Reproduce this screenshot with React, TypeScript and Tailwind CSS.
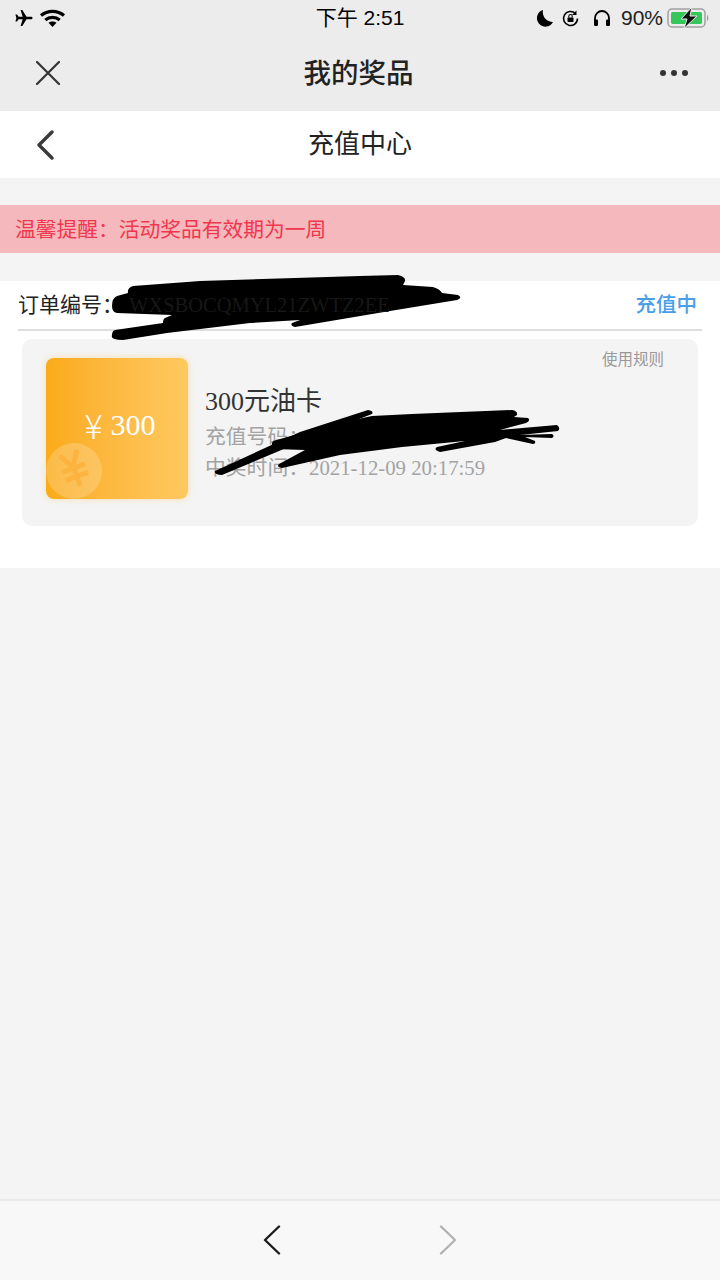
const cjkSans = "font-['Liberation_Sans','Noto_Sans_CJK_SC',sans-serif]";
const cjkSerif = "font-['Liberation_Serif','Noto_Sans_CJK_SC',serif]";

function StatusBar() {
  return (
    <div className="relative flex h-[36px] items-center justify-between pl-[14px] pr-[9px] text-black">
      <div className="flex items-center gap-[6px]">
        <svg width="19" height="18" viewBox="0 0 19 18" fill="currentColor">
          <path d="M18.600 9c0-.8-.9-1.300-1.900-1.300h-4.200L8.300 1H6.600l2.100 6.700H4.600L3 5.400H1.400l1 3.600-1 3.600H3l1.600-2.300h4.100L6.600 17h1.700l4.200-6.700h4.200c1 0 1.900-.5 1.900-1.300z" />
        </svg>
        <svg width="27" height="20" viewBox="0 0 27 20" fill="none" stroke="currentColor" strokeWidth="3.200">
          <path d="M2 7.500c6.500-5.600 16.500-5.600 23 0" />
          <path d="M6.300 12c4-3.400 10.400-3.400 14.400 0" />
          <path d="M13.500 19l-4-4.200c2.200-1.700 5.800-1.700 8 0z" fill="currentColor" stroke="none" />
        </svg>
      </div>
      <div className={`absolute left-0 right-0 text-center text-[21px] ${cjkSans}`}>下午 2:51</div>
      <div className="flex items-center">
        <svg width="18" height="18" viewBox="0 0 18 18" fill="currentColor" className="mr-[7px]">
          <path d="M7 1A8.500 8.500 0 1 0 17 13 A10 10 0 0 1 7 1z" />
        </svg>
        <svg width="19" height="19" viewBox="0 0 19 19" fill="none" stroke="currentColor" strokeWidth="1.600" className="mr-[13px]">
          <path d="M16.500 9.500a7 7 0 1 1-2.200-5.100" />
          <path d="M15.500 1.500v4.500h-4.500z" fill="currentColor" stroke="none" />
          <rect x="6.500" y="8.500" width="6" height="4.500" rx="0.800" fill="currentColor" stroke="none" />
          <path d="M7.800 8.500V7.200a1.700 1.700 0 0 1 3.400 0v1.300" strokeWidth="1.100" />
        </svg>
        <svg width="18" height="18" viewBox="0 0 18 18" fill="none" className="mr-[10px]">
          <path d="M2 13V9a7 7 0 0 1 14 0v4" stroke="currentColor" strokeWidth="1.800" />
          <rect x="1" y="10.500" width="4" height="6.500" rx="1.300" fill="currentColor" />
          <rect x="13" y="10.500" width="4" height="6.500" rx="1.300" fill="currentColor" />
        </svg>
        <span className={`mr-[4px] text-[21px] text-[#222] ${cjkSans}`}>90%</span>
        <svg width="44" height="22" viewBox="0 0 44 22" fill="none">
          <rect x="1" y="2" width="37" height="18" rx="4" stroke="#a0a0a0" strokeWidth="1.500" />
          <rect x="4" y="5" width="31" height="12" rx="1.800" fill="#35c759" />
          <path d="M40 8c1.800.4 1.800 5.600 0 6z" fill="#a0a0a0" />
          <path d="M25 0L14 12h6l-3 9.500L30 9h-7z" fill="#111" stroke="#ececec" strokeWidth="1" />
        </svg>
      </div>
    </div>
  );
}

function TitleBar() {
  return (
    <div className="flex h-[75px] items-center justify-between pl-[36px] pr-[32px]">
      <svg width="24" height="24" viewBox="0 0 24 24" stroke="#333" strokeWidth="2.200" strokeLinecap="round" className="mb-[2px]">
        <path d="M1 1l22 22M23 1L1 23" />
      </svg>
      <h1 className={`mr-[3px] text-[27.500px] font-medium text-[#222] ${cjkSans}`}>我的奖品</h1>
      <div className="mb-[2px] flex gap-[5px]">
        <span className="h-[6px] w-[6px] rounded-full bg-[#333]" />
        <span className="h-[6px] w-[6px] rounded-full bg-[#333]" />
        <span className="h-[6px] w-[6px] rounded-full bg-[#333]" />
      </div>
    </div>
  );
}

function Thumb() {
  return (
    <div className="relative flex h-[141px] w-[142px] shrink-0 items-center justify-center overflow-hidden rounded-[8px] bg-gradient-to-r from-[#fbab17] to-[#fec95f] shadow-[0_0_6px_rgba(251,200,110,0.55)]">
      <div className="flex items-center gap-[8px] pb-[8px] pl-[6px] text-white">
        <span className="font-['Noto_Sans_CJK_SC',sans-serif] text-[34px] leading-[40px] font-light">¥</span>
        <span className={`text-[30px] ${cjkSerif}`}>300</span>
      </div>
      <svg width="60" height="60" viewBox="0 0 60 60" className="absolute bottom-0 left-0">
        <circle cx="28" cy="32" r="28" fill="#ffffff" fillOpacity="0.2" />
        <g transform="rotate(-20 28 30)" fill="none" stroke="#fcb33f" strokeWidth="5">
          <path d="M19 13l9 15 9-15M28 27v21M16 29h24M16 38h24" />
        </g>
      </svg>
    </div>
  );
}

function Scribbles() {
  return (
    <svg width="720" height="1280" viewBox="0 0 720 1280" className="pointer-events-none absolute left-0 top-0">
      <path
        fill="#000"
        d="M112 306 Q112 298 117 296 L128 293 Q127 288 133 286 L200 281 L360 276 L398 275 Q406 277 405 281 L403 285 L433 287 Q440 289 442 293 L458 295 Q463 298 457 300 L390 311 L295 327 Q290 326 292 323 L300 320 L250 323 L167 333 L123 340 Q110 340 112 335 Q112 331 115 330 L163 323 Q163 319 165 318 L172 315 L117 313 Q112 312 112 306 Z"
      />
      <g fill="#000">
        <path d="M215 471 L300 432 L368 410 Q374 411 372 414 L310 438 L222 475 Q214 475 215 471 Z" />
        <path d="M273 441 L330 425 L372 416 L412 414 L512 410 Q518 411 517 415 L514 417 L528 418 Q531 421 526 423 L500 430 L557 425 Q561 428 558 431 L520 435 L552 434 Q555 436 552 438 L525 437 L535 441 Q536 444 533 444 L506 438 L495 442 L440 452 Q433 450 437 447 L465 441 L402 447 L340 455 L282 468 Q276 467 279 464 L305 450 L275 449 Q270 446 273 441 Z" />
      </g>
    </svg>
  );
}

export default function App() {
  return (
    <div className={`relative flex min-h-[1280px] w-[720px] flex-col bg-[#f4f4f4] ${cjkSans}`}>
      <div className="bg-[#ececec]">
        <StatusBar />
        <TitleBar />
      </div>

      <div className="flex h-[67px] items-center justify-between bg-white pl-[36px] pr-[36px]">
        <svg width="18" height="30" viewBox="0 0 18 30" fill="none" stroke="#3a3a3a" strokeWidth="3.400" strokeLinecap="round" strokeLinejoin="round">
          <path d="M16 2L3 15l13 13" />
        </svg>
        <h2 className="text-[26px] text-[#222]">充值中心</h2>
        <span className="w-[18px]" />
      </div>

      <div className="mt-[27px] flex h-[48px] items-center bg-[#f5b8bd] pl-[15px] pt-px text-[20.750px] text-[#f0374d]">
        温馨提醒：活动奖品有效期为一周
      </div>

      <div className="mt-[28px] h-[287px] bg-white px-[18px]">
        <div className="flex h-[50px] items-center justify-between border-b-2 border-[#dedede] pr-[5px]">
          <div className="relative z-10 flex items-center text-[21px] text-[#222]">
            <span>订单编号：</span>
            <span className={`ml-[6px] text-[20.500px] text-[#171717] ${cjkSerif}`}>WXSBOCQMYL21ZWTZ2EE</span>
          </div>
          <span className="text-[20.500px] font-medium text-[#4a9ee8]">充值中</span>
        </div>

        <div className="relative mx-[4px] mt-[8px] flex h-[187px] rounded-[10px] bg-[#f4f4f4] pl-[24px] pt-[19px]">
          <Thumb />
          <div className={`ml-[17px] pt-[25px] ${cjkSerif}`}>
            <div className="text-[26px] leading-[38px] text-[#333]">300元油卡</div>
            <div className="text-[20.800px] leading-[31px] text-[#a3a3a3]">充值号码：</div>
            <div className="text-[20.800px] leading-[31px] text-[#a3a3a3]">中奖时间：2021-12-09 20:17:59</div>
          </div>
          <span className={`absolute right-[34px] top-[9px] text-[15.500px] text-[#999] ${cjkSans}`}>使用规则</span>
        </div>
      </div>

      <div className="flex-1" />

      <div className="flex h-[81px] items-center justify-center gap-[158px] border-t-2 border-[#eaeaea] bg-[#f8f8f8] pb-[2px]">
        <svg width="18" height="30" viewBox="0 0 18 30" fill="none" stroke="#1c1c1c" strokeWidth="2.400" strokeLinecap="round" strokeLinejoin="round">
          <path d="M16 1.500L2 15l14 13.500" />
        </svg>
        <svg width="18" height="30" viewBox="0 0 18 30" fill="none" stroke="#b2b2b2" strokeWidth="2.400" strokeLinecap="round" strokeLinejoin="round">
          <path d="M2 1.500L16 15 2 28.500" />
        </svg>
      </div>

      <Scribbles />
    </div>
  );
}
